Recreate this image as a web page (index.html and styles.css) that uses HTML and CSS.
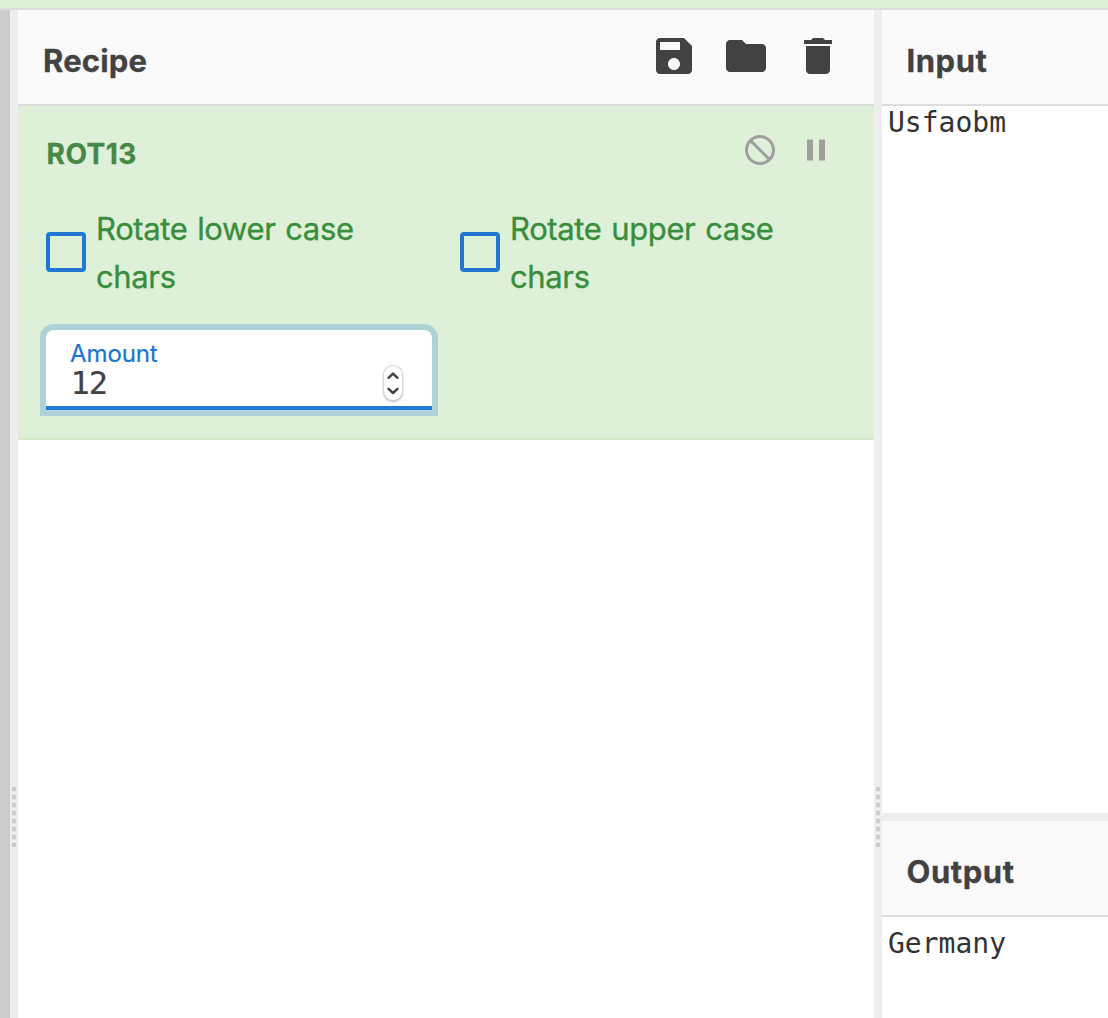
FILE: index.html
```html
<!DOCTYPE html>
<html lang="en">
<head>
<meta charset="utf-8">
<title>Recipe</title>
<link rel="stylesheet" href="styles.css">
</head>
<body>
<div class="banner"></div>
<main class="workspace">
  <div class="operations-edge"></div>
  <div class="gutter"><span class="grip"></span></div>
  <section class="recipe">
    <header class="title-bar">
      <h2 class="title title-recipe">Recipe</h2>
      <div class="controls">
        <svg class="icon" viewBox="0 0 24 24"><path d="M17 3H5c-1.11 0-2 .9-2 2v14c0 1.1.89 2 2 2h14c1.1 0 2-.9 2-2V7l-4-4zm-5 16c-1.66 0-3-1.34-3-3s1.34-3 3-3 3 1.34 3 3-1.34 3-3 3zm3-10H5V5h10v4z"/></svg>
        <svg class="icon" viewBox="0 0 24 24"><path d="M10 4H4c-1.1 0-1.99.9-1.99 2L2 18c0 1.1.9 2 2 2h16c1.1 0 2-.9 2-2V8c0-1.1-.9-2-2-2h-8l-2-2z"/></svg>
        <svg class="icon" viewBox="0 0 24 24"><path d="M6 19c0 1.1.9 2 2 2h8c1.1 0 2-.9 2-2V7H6v12zM19 4h-3.5l-1-1h-5l-1 1H5v2h14V4z"/></svg>
      </div>
    </header>
    <article class="operation">
      <div class="op-head">
        <h3 class="op-name">ROT13</h3>
        <div class="op-controls">
          <svg class="op-icon" viewBox="0 0 24 24"><path d="M12 2C6.48 2 2 6.48 2 12s4.48 10 10 10 10-4.48 10-10S17.52 2 12 2zm0 18c-4.42 0-8-3.58-8-8 0-1.85.63-3.55 1.69-4.9L16.9 18.31C15.55 19.37 13.85 20 12 20zm6.31-3.1L7.1 5.69C8.45 4.63 10.15 4 12 4c4.42 0 8 3.58 8 8 0 1.85-.63 3.55-1.69 4.9z"/></svg>
          <svg class="op-icon" viewBox="0 0 24 24"><path d="M6 19h4V5H6v14zm8-14v14h4V5h-4z"/></svg>
        </div>
      </div>
      <div class="checks">
        <div class="check"><span class="box"></span><span class="check-text">Rotate lower case<br>chars</span></div>
        <div class="check"><span class="box"></span><span class="check-text">Rotate upper case<br>chars</span></div>
      </div>
      <div class="amount">
        <div class="field">
          <span class="label">Amount</span>
          <span class="value">12</span>
        </div>
        <svg class="stepper" viewBox="0 0 18 34"><path d="M4.5 11.8l4.5-4.2 4.5 4.2M4.5 22.8l4.5 4.2 4.5-4.2"/></svg>
      </div>
    </article>
  </section>
  <div class="gutter"><span class="grip"></span></div>
  <div class="io">
    <section class="input">
      <header class="title-bar"><h2 class="title">Input</h2></header>
      <div class="text">Usfaobm</div>
    </section>
    <div class="divider"></div>
    <section class="output">
      <header class="title-bar"><h2 class="title">Output</h2></header>
      <div class="text text-output">Germany</div>
    </section>
  </div>
</main>
</body>
</html>
```
FILE: styles.css
```css
* { box-sizing: border-box; }
body { margin: 0; height: 1018px; overflow: hidden; display: flex; flex-direction: column; background: #fff; font-family: Inter, "Liberation Sans", sans-serif; color: #424242; }
h2, h3 { margin: 0; }
svg { display: block; }
.banner { height: 10px; flex: none; background: #dff0d8; border-bottom: 2px solid #ddd; }
.workspace { flex: 1; display: flex; min-height: 0; }
.operations-edge { width: 10px; background: #ccc; }
.gutter { width: 8px; background: #eee; display: flex; justify-content: center; padding-top: 777px; }
.grip { width: 4px; height: 60px; background: repeating-linear-gradient(#ccc 0 4px, #e6e6e6 4px 5px, #eee 5px 7px, #e6e6e6 7px 8px); }
.recipe { width: 856px; }
.title-bar { height: 96px; background: #fafafa; border-bottom: 2px solid #ddd; display: flex; justify-content: space-between; padding: 22px 32px 0 24px; }
.title { font-size: 31px; line-height: 57px; font-weight: 700; letter-spacing: 0.55px; padding-left: 0.5px; -webkit-text-stroke: 0.3px #424242; }
.title-recipe { letter-spacing: 0.15px; padding-left: 1px; }
.controls { display: flex; gap: 24px; }
.icon { width: 48px; height: 48px; fill: #424242; }
.operation { height: 334px; background: #dff0d8; border-bottom: 2px solid #d6e9c6; padding: 26px 40px 0 28px; }
.op-head { display: flex; justify-content: space-between; height: 73px; }
.op-name { font-size: 28px; line-height: 45px; font-weight: 700; letter-spacing: 0.5px; color: #468847; padding-left: 0.5px; -webkit-text-stroke: 0.3px #468847; }
.op-controls { display: flex; gap: 20px; }
.op-icon { width: 36px; height: 36px; fill: #9e9e9e; }
.checks { display: flex; }
.check { width: 414px; flex: none; height: 96px; display: flex; gap: 10px; }
.box { width: 40px; height: 40px; border: 4px solid #2277d3; border-radius: 4px; margin-top: 27px; }
.check-text { font-size: 31px; line-height: 48px; letter-spacing: -0.37px; word-spacing: 1.4px; color: #388e3c; -webkit-text-stroke: 0.35px #388e3c; }
.amount { width: 386px; height: 80px; margin-top: 29px; background: #fff; border-bottom: 4px solid #2277d3; border-radius: 8px 8px 0 0; box-shadow: 0 0 0 6px #afd2d6; display: flex; justify-content: space-between; padding: 10px 30px 0 24px; }
.field { display: flex; flex-direction: column; }
.label { font-size: 24px; line-height: 28px; letter-spacing: -0.1px; color: #1976d2; -webkit-text-stroke: 0.2px #1976d2; }
.value { font: 32px/30px "DejaVu Sans Mono", monospace; letter-spacing: -1px; padding-left: 0.5px; -webkit-text-stroke: 0.2px #424242; }
.stepper { width: 18px; height: 34px; margin-top: 26px; border-radius: 9px; box-shadow: 0 0 0 1px #d8d8d8, 0 1px 2px 1px #bbb; fill: none; stroke: #424242; stroke-width: 2.4; stroke-linecap: round; stroke-linejoin: round; background: #fff; }
.io { flex: 1; display: flex; flex-direction: column; }
.input { height: 803px; }
.divider { height: 8px; background: #eee; }
.text { font: 28px/33px "DejaVu Sans Mono", monospace; color: #333; padding-left: 6px; }
.text-output { padding-top: 10px; }
```
